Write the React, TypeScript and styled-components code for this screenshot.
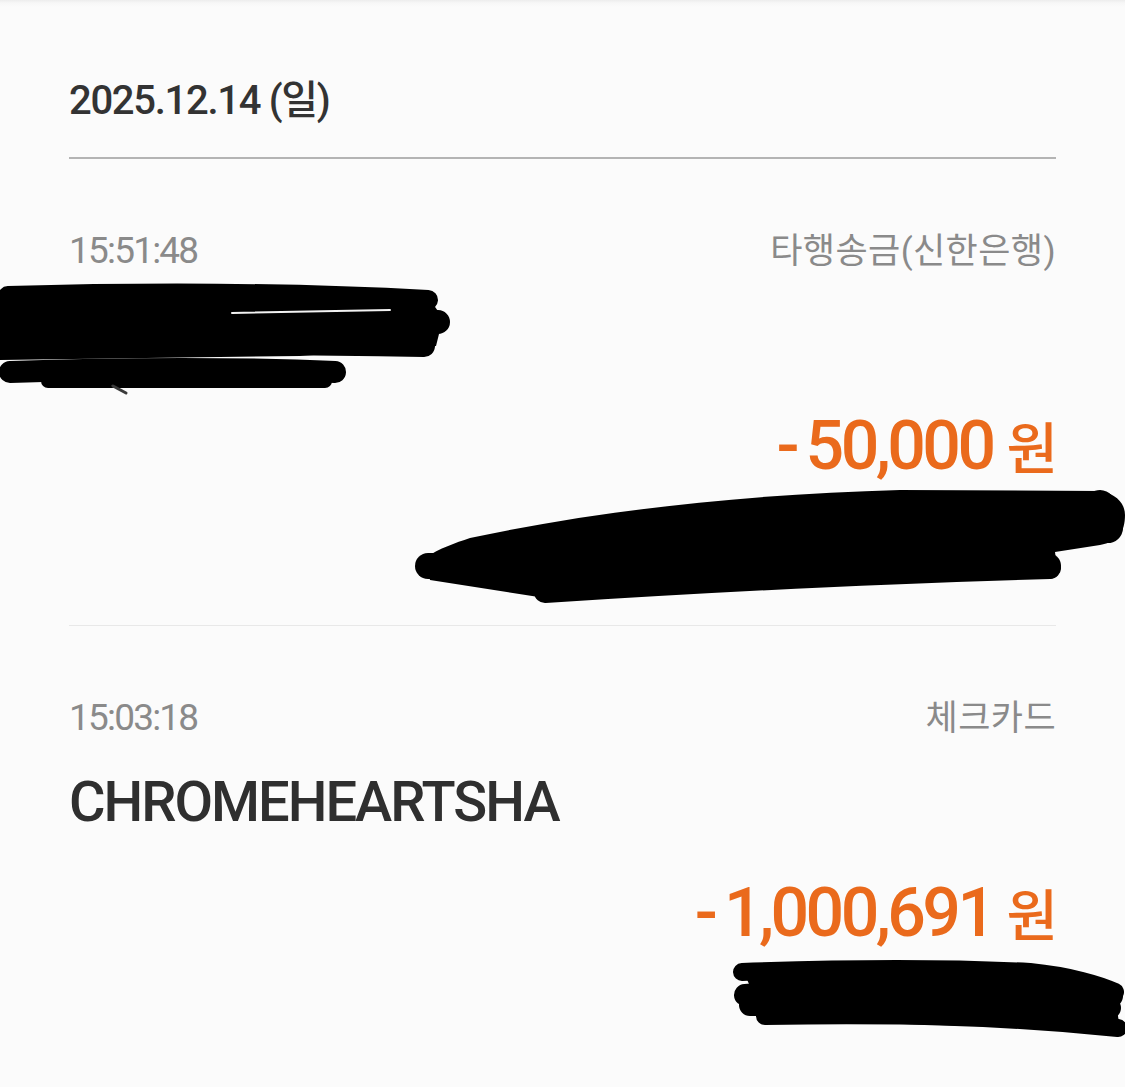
import React from "react";
import styled, { createGlobalStyle } from "styled-components";

const GlobalStyle = createGlobalStyle`
    html,
    body {
        margin: 0;
        padding: 0;
        background: #fbfbfb;
    }
    * {
        box-sizing: border-box;
    }
`;

const FONT = `Roboto, "Noto Sans CJK KR", "Noto Sans", sans-serif`;

const Screen = styled.div`
    position: relative;
    min-height: 100vh;
    overflow: hidden;
    padding: 0 69px;
    background: linear-gradient(#ededed 0, #f7f7f7 3px, #fbfbfb 7px);
    font-family: ${FONT};
`;

const DateHeader = styled.h2`
    margin: 0;
    padding: 81px 0 36px;
    font-size: 40px;
    line-height: 40px;
    font-weight: 500;
    letter-spacing: -1.3px;
    color: #333;
    border-bottom: 2px solid #b4b4b4;
`;

const Transaction = styled.section`
    position: relative;
    display: flex;
    flex-direction: column;
    padding: 70px 0 65px;
    border-bottom: 1px solid #e8e8e8;
`;

const MetaRow = styled.div`
    display: flex;
    justify-content: space-between;
    align-items: baseline;
    height: 44px;
    line-height: 44px;
`;

const Time = styled.span`
    font-size: 37px;
    letter-spacing: -1.8px;
    color: #8a8a8a;
`;

const Kind = styled.span`
    font-size: 35px;
    letter-spacing: 0.4px;
    color: #8a8a8a;
`;

const Merchant = styled.div`
    margin-top: 30px;
    height: 64px;
    font-size: 56px;
    line-height: 64px;
    font-weight: 500;
    letter-spacing: -2px;
    color: #2f2f2f;
`;

const AmountRow = styled.div`
    margin-top: 39px;
    display: flex;
    justify-content: flex-end;
    align-items: baseline;
    height: 80px;
    line-height: 80px;
    color: #ea6a1c;
    font-weight: 500;
`;

const Sign = styled.span`
    font-size: 68px;
    margin-right: 6px;
`;

const Amount = styled.span`
    font-size: 68px;
    letter-spacing: -3.6px;
    margin-right: 14px;
`;

const Unit = styled.span`
    font-size: 56px;
    letter-spacing: -2px;
`;

const Balance = styled.div`
    margin-top: 30px;
    height: 44px;
`;

const Redaction = styled.svg<{ $left: number; $top: number }>`
    position: absolute;
    left: ${(p) => p.$left}px;
    top: ${(p) => p.$top}px;
    pointer-events: none;
    overflow: visible;

    path {
        fill: none;
        stroke: #000;
        stroke-linecap: round;
        stroke-linejoin: round;
    }
    path.mass {
        fill: #000;
        stroke: none;
    }
    path.gap {
        stroke: #f2f2f2;
    }
    path.tick {
        stroke: #3a3a3a;
    }
`;

// scribbles are drawn in page coordinates via viewBox, offset from the row origin
const NameScribble = () => (
    <Redaction $left={-69} $top={124} width={455} height={117} viewBox="0 283 455 117">
        <path className="mass" d="M0 292 L425 293 L443 318 L436 346 L300 356 L0 360 Z" />
        <path d="M8 296 C150 292 300 293 428 300" strokeWidth={20} />
        <path d="M8 328 C150 322 300 320 438 322" strokeWidth={24} />
        <path d="M8 345 C150 342 300 344 424 346" strokeWidth={22} />
        <path className="gap" d="M232 313 C290 312 340 311 390 310" strokeWidth={2} />
        <path className="gap" d="M60 362 C150 360 230 360 300 364" strokeWidth={4} />
        <path d="M10 372 C120 368 250 368 335 372" strokeWidth={22} />
        <path d="M48 381 L325 381" strokeWidth={14} />
        <path className="tick" d="M113 386 L126 393" strokeWidth={3} />
    </Redaction>
);

const BalanceScribble = () => (
    <Redaction $left={341} $top={324} width={715} height={127} viewBox="410 483 715 127">
        <path
            className="mass"
            d="M425 558 C440 548 455 543 470 538 C600 510 750 494 900 490 L1100 491 C1118 494 1125 505 1125 515 C1125 532 1118 542 1100 545 L1055 552 L1058 575 L700 585 L545 598 L430 580 Z"
        />
        <path d="M428 566 L1048 566" strokeWidth={26} />
        <path d="M545 592 C700 582 900 572 1050 568" strokeWidth={22} />
        <path d="M1100 505 L1108 528" strokeWidth={30} />
    </Redaction>
);

const CardScribble = () => (
    <Redaction $left={661} $top={332} width={395} height={82} viewBox="730 958 395 82">
        <path className="mass" d="M745 975 L1030 975 L1115 995 L1120 1030 L765 1020 Z" />
        <path d="M742 972 C850 968 950 968 1030 972 C1070 976 1100 985 1115 992" strokeWidth={18} />
        <path d="M745 995 C900 985 1050 985 1112 996" strokeWidth={22} />
        <path d="M750 1005 L1110 1008" strokeWidth={22} />
        <path d="M765 1016 C900 1014 1000 1016 1118 1028" strokeWidth={18} />
    </Redaction>
);

type TxProps = {
    time: string;
    kind: string;
    merchant?: string;
    amount: string;
    scribbles: React.ReactNode;
};

const TransactionItem = ({ time, kind, merchant, amount, scribbles }: TxProps) => (
    <Transaction>
        <MetaRow>
            <Time>{time}</Time>
            <Kind>{kind}</Kind>
        </MetaRow>
        <Merchant>{merchant}</Merchant>
        <AmountRow>
            <Sign>-</Sign>
            <Amount>{amount}</Amount>
            <Unit>원</Unit>
        </AmountRow>
        <Balance />
        {scribbles}
    </Transaction>
);

const App = () => {
    return (
        <Screen>
            <GlobalStyle />
            <DateHeader>2025.12.14 (일)</DateHeader>
            <TransactionItem
                time="15:51:48"
                kind="타행송금(신한은행)"
                amount="50,000"
                scribbles={
                    <>
                        <NameScribble />
                        <BalanceScribble />
                    </>
                }
            />
            <TransactionItem
                time="15:03:18"
                kind="체크카드"
                merchant="CHROMEHEARTSHA"
                amount="1,000,691"
                scribbles={<CardScribble />}
            />
        </Screen>
    );
};

export default App;
